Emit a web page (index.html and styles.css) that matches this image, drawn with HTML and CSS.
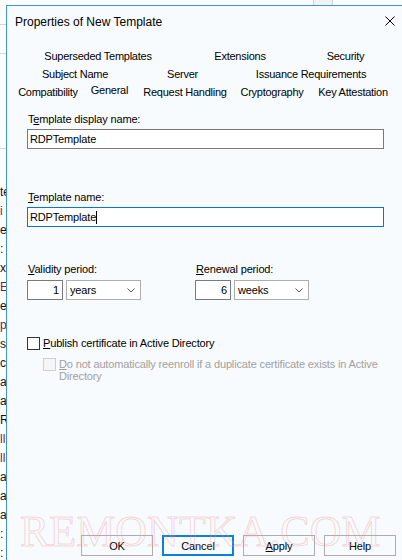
FILE: index.html
```html
<!DOCTYPE html>
<html>
<head>
<meta charset="utf-8">
<title>Properties of New Template</title>
<link rel="stylesheet" href="styles.css">
</head>
<body>
<div class="screen">
  <div class="bgwin">
    <div class="hline l1"></div>
    <div class="hline l2"></div>
    <div class="hline l3"></div>
    <div class="bgtext">
      <div>te</div><div class="m">i</div><div>e</div><div>:</div><div>x</div><div class="m">E</div><div>e</div><div class="m">p</div><div>s</div><div>ct</div><div>a</div><div>a</div><div>R</div><div class="m">ll</div><div class="m">ll</div><div>a</div><div>a</div><div>a</div><div>:</div><div>:</div>
    </div>
  </div>
  <div class="right">
    <div class="topband"><div class="bgbtn"></div></div>
    <div class="dialog">
      <div class="titlebar">
        <span class="title">Properties of New Template</span>
        <svg class="close" width="10" height="10" viewBox="0 0 10 10"><path d="M0.5 0.5 L9.5 9.5 M9.5 0.5 L0.5 9.5" stroke="#000" stroke-width="1" fill="none"/></svg>
      </div>
      <div class="tabs">
        <div class="tabrow r1"><div class="tab">Superseded Templates</div><div class="tab">Extensions</div><div class="tab">Security</div></div>
        <div class="tabrow r2"><div class="tab">Subject Name</div><div class="tab">Server</div><div class="tab">Issuance Requirements</div></div>
        <div class="tabrow r3"><div class="tab">Compatibility</div><div class="tab sel">General</div><div class="tab">Request Handling</div><div class="tab">Cryptography</div><div class="tab">Key Attestation</div></div>
      </div>
      <div class="page">
        <div class="lbl">T<u>e</u>mplate display name:</div>
        <div class="field">RDPTemplate</div>
        <div class="lbl gap1"><u>T</u>emplate name:</div>
        <div class="field focus">RDPTemplate<span class="caret"></span></div>
        <div class="periods">
          <div class="period">
            <div class="lbl plbl"><u>V</u>alidity period:</div>
            <div class="pctl">
              <div class="num">1</div>
              <div class="combo"><span>years</span><svg width="8" height="5" viewBox="0 0 8 5"><path d="M0.5 0.5 L4 4 L7.5 0.5" stroke="#5a5a5a" stroke-width="1" fill="none"/></svg></div>
            </div>
          </div>
          <div class="period">
            <div class="lbl plbl"><u>R</u>enewal period:</div>
            <div class="pctl">
              <div class="num">6</div>
              <div class="combo"><span>weeks</span><svg width="8" height="5" viewBox="0 0 8 5"><path d="M0.5 0.5 L4 4 L7.5 0.5" stroke="#5a5a5a" stroke-width="1" fill="none"/></svg></div>
            </div>
          </div>
        </div>
        <div class="chk"><span class="box"></span><span><u>P</u>ublish certificate in Active Directory</span></div>
        <div class="sub"><span class="box dis"></span><span><u>D</u>o not automatically reenroll if a duplicate certificate exists in Active<br>Directory</span></div>
      </div>
      <div class="buttons">
        <div class="btn">OK</div>
        <div class="btn def">Cancel</div>
        <div class="btn"><span><u>A</u>pply</span></div>
        <div class="btn">Help</div>
      </div>
    </div>
  </div>
  <div class="watermark">REMONTKA.COM</div>
</div>
</body>
</html>
```
FILE: styles.css
```css
* { box-sizing: border-box; }
html, body { margin: 0; padding: 0; }
body {
  width: 402px;
  height: 560px;
  overflow: hidden;
  background: #ffffff;
  font-family: "Liberation Sans", Arial, sans-serif;
  font-size: 11px;
  letter-spacing: -0.15px;
  color: #000;
}
.screen {
  position: relative;
  display: flex;
  width: 402px;
  height: 560px;
}
.bgwin {
  width: 6px;
  flex: none;
  overflow: hidden;
  background: #fff;
  display: flex;
  flex-direction: column;
}
.hline { height: 1px; background: #d6d6d6; flex: none; width: 6px; }
.l1 { margin-top: 24px; }
.l2 { margin-top: 28px; }
.l3 { margin-top: 94px; }
.bgtext {
  margin-top: 34px;
  line-height: 19px;
  font-size: 12px;
  letter-spacing: 0;
  white-space: nowrap;
  color: #111;
}
.bgtext .m { color: #6d1f4b; }
.right {
  flex: 1;
  min-width: 0;
  display: flex;
  flex-direction: column;
}
.topband { height: 5px; flex: none; background: #fff; }
.bgbtn {
  margin-left: 307px;
  width: 20px;
  height: 5px;
  background: #f2f2f2;
  border-left: 1px solid #cfcfcf;
  border-right: 1px solid #cfcfcf;
}
.dialog {
  flex: 1;
  background: #f8fbfe;
  border-top: 1px solid #3c92dc;
  border-left: 1px solid #3c92dc;
  display: flex;
  flex-direction: column;
}
.titlebar {
  height: 32px;
  flex: none;
  display: flex;
  align-items: center;
  justify-content: space-between;
  padding: 0 7px 0 8px;
  font-size: 12px;
  letter-spacing: 0;
}
.close { align-self: flex-start; margin-top: 10px; }
.tabs {
  margin-top: 9px;
  margin-left: 4px;
  width: 387px;
  letter-spacing: -0.25px;
}
.tabrow {
  display: grid;
  height: 18px;
  line-height: 18px;
  text-align: center;
  white-space: nowrap;
}
.r1 { grid-template-columns: 174px 110px 101px; }
.r2 { grid-template-columns: 128px 87px 170px; }
.r3 { grid-template-columns: 74px 49px 102px 72px 90px; }
.tab.sel { line-height: 14px; }
.page {
  padding: 11px 18px 0 20px;
}
.lbl {
  line-height: 14px;
  padding-left: 1px;
  margin-bottom: 3px;
  white-space: nowrap;
}
.gap1 { margin-top: 41px; }
.field {
  height: 20px;
  border: 1px solid #7a7a7a;
  background: #fff;
  padding-left: 2px;
  line-height: 18px;
  white-space: nowrap;
}
.field.focus { border-color: #0078d7; }
.caret {
  display: inline-block;
  width: 1px;
  height: 13px;
  background: #000;
  vertical-align: -3px;
}
.periods {
  margin-top: 35px;
  display: grid;
  grid-template-columns: 168px auto;
}
.plbl { margin-bottom: 4px; }
.pctl { display: flex; gap: 3px; }
.num {
  width: 36px;
  height: 20px;
  border: 1px solid #7a7a7a;
  background: #fff;
  text-align: right;
  padding-right: 3px;
  line-height: 18px;
}
.combo {
  width: 75px;
  height: 20px;
  border: 1px solid #adadad;
  background: #fff;
  display: flex;
  align-items: center;
  justify-content: space-between;
  padding: 0 5px 0 3px;
  line-height: 18px;
}
.chk {
  display: flex;
  align-items: center;
  gap: 3px;
  margin-top: 37px;
  line-height: 13px;
  white-space: nowrap;
}
.box {
  width: 13px;
  height: 13px;
  flex: none;
  border: 1px solid #333;
  background: #fff;
}
.box.dis { border-color: #cfcfcf; background: #f6f6f6; }
.sub {
  display: flex;
  align-items: flex-start;
  gap: 3px;
  margin-top: 8px;
  margin-left: 16px;
  line-height: 12px;
  color: #a0a0a0;
  white-space: nowrap;
}
.buttons {
  margin-top: auto;
  margin-bottom: 4px;
  display: flex;
  justify-content: flex-end;
  gap: 9px;
  padding-right: 6px;
}
.btn {
  width: 72px;
  height: 21px;
  border: 1px solid #adadad;
  display: flex;
  align-items: center;
  justify-content: center;
}
.btn.def { border: 2px solid #0f7fdc; }
.watermark {
  position: absolute;
  left: 20px;
  top: 510px;
  font-family: "Liberation Serif", "Times New Roman", serif;
  font-size: 44px;
  line-height: 44px;
  letter-spacing: 0;
  color: transparent;
  -webkit-text-stroke: 1px rgba(232, 150, 150, 0.38);
  pointer-events: none;
  white-space: nowrap;
}
```
